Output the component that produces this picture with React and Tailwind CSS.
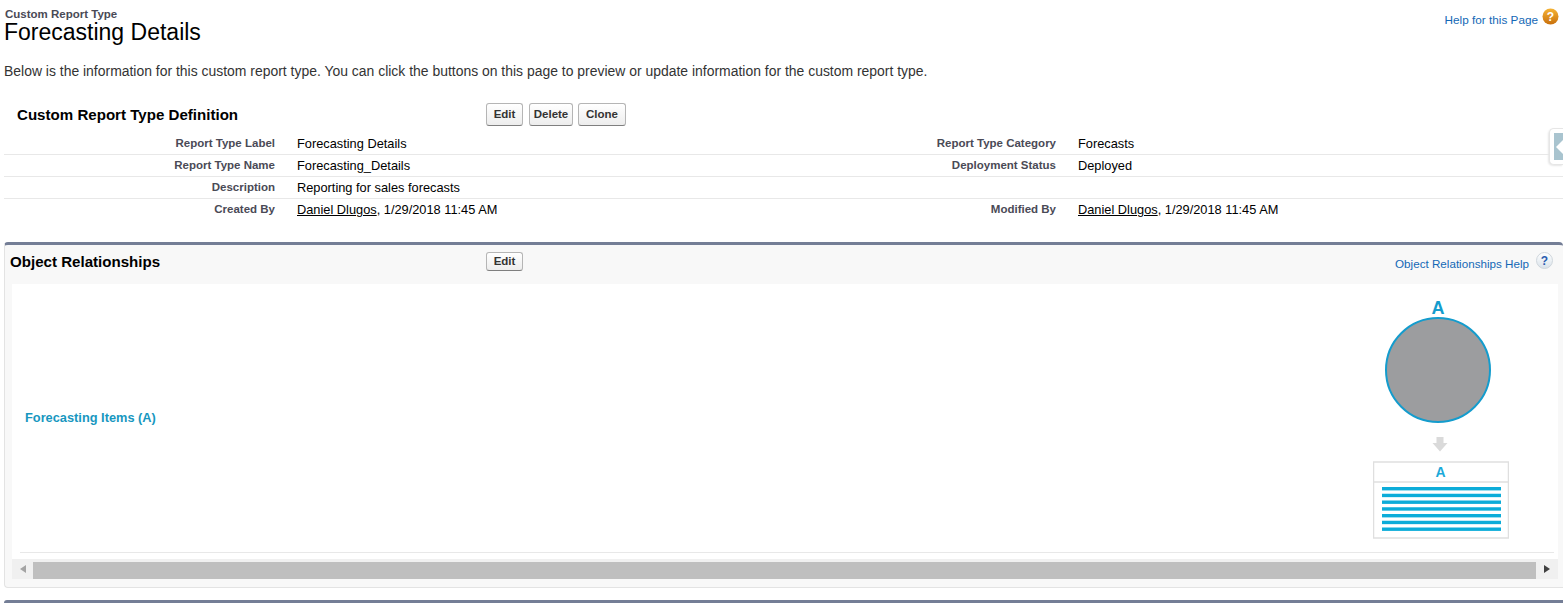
function Btn({ children, className = "" }) {
  return (
    <button className={`rounded-[3px] border border-[#b5b5b5] border-b-[#7f7f7f] bg-gradient-to-b from-white to-[#ededed] text-[11.5px] leading-none font-bold text-[#333] ${className}`}>
      {children}
    </button>
  );
}

function DetailRow({ label, value, label2, value2, last }) {
  return (
    <div className={`flex h-[22px] items-center text-[12.8px] ${last ? "" : "border-b border-[#e8e8e8]"}`}>
      <div className="w-[271px] text-right text-[11.5px] font-bold text-[#4a4a56]">{label}</div>
      <div className="ml-[22px] w-[488px] text-black">{value}</div>
      {label2 && <div className="w-[271px] text-right text-[11.5px] font-bold text-[#4a4a56]">{label2}</div>}
      {label2 && <div className="ml-[22px] text-black">{value2}</div>}
    </div>
  );
}

function Who() {
  return (
    <span>
      <span className="underline">Daniel Dlugos</span>, 1/29/2018 11:45 AM
    </span>
  );
}

function HelpIcon({ orange }) {
  return (
    <svg width="17" height="17" viewBox="0 0 17 17">
      <defs>
        <linearGradient id="og" x1="0" y1="0" x2="0" y2="1">
          <stop offset="0" stopColor="#f5b335" />
          <stop offset="1" stopColor="#c9700c" />
        </linearGradient>
        <linearGradient id="wg" x1="0" y1="0" x2="0" y2="1">
          <stop offset="0" stopColor="#ffffff" />
          <stop offset="1" stopColor="#d9e2ea" />
        </linearGradient>
      </defs>
      <circle cx="8.5" cy="8.5" r="8" fill={orange ? "url(#og)" : "url(#wg)"} stroke={orange ? "none" : "#cfd6dc"} />
      <text x="8.5" y="13" textAnchor="middle" fontSize="12" fontWeight="700" fontFamily="Liberation Sans" fill={orange ? "#fff" : "#2a5db0"}>?</text>
    </svg>
  );
}

function Diagram() {
  const lines = [0, 1, 2, 3, 4, 5, 6];
  return (
    <svg width="136" height="256" viewBox="0 0 136 256" className="mr-[45px]">
      <text x="65" y="30" textAnchor="middle" fontSize="18" fontWeight="700" fontFamily="Liberation Sans" fill="#149ccd">A</text>
      <circle cx="65" cy="86" r="52" fill="#9c9d9f" stroke="#149ccd" strokeWidth="2" />
      <path d="M63.5 153h7v6h4l-7.5 8.5l-7.5-8.5h4z" fill="#dadada" />
      <rect x="0.5" y="178" width="135" height="76" fill="#fff" stroke="#dfdfdf" strokeWidth="1.5" />
      <path d="M0 198h136" stroke="#dfdfdf" strokeWidth="1.5" />
      <text x="67.5" y="193" textAnchor="middle" fontSize="14" fontWeight="700" fontFamily="Liberation Sans" fill="#1ba9d9">A</text>
      {lines.map((i) => (
        <rect key={i} x="9" y={203 + i * 6.75} width="119" height="3.4" fill="#0cacd9" />
      ))}
    </svg>
  );
}

export default function App() {
  return (
    <div className="relative h-[603px] overflow-hidden bg-white font-['Liberation_Sans',Arial,sans-serif]">
      <div className="flex justify-between pl-[5px] pr-[4px] pt-[8px]">
        <div>
          <div className="text-[11.5px] leading-[13px] font-bold text-[#4a4a56]">Custom Report Type</div>
          <h1 className="-ml-px -mt-px text-[23px] leading-[24px] text-black">Forecasting Details</h1>
        </div>
        <div className="flex items-start gap-[4px] text-[11.75px] text-[#1468b6]">
          <span className="mt-[3px]">Help for this Page</span>
          <HelpIcon orange />
        </div>
      </div>

      <p className="mt-[19px] pl-[4px] text-[13.95px] leading-[16px] text-[#333]">
        Below is the information for this custom report type. You can click the buttons on this page to preview or update information for the custom report type.
      </p>

      <div className="ml-[4px] mt-[23px]">
        <div className="flex h-[31px] items-start">
          <h2 className="ml-[13px] w-[469px] text-[15.1px] leading-[26px] font-bold text-black">Custom Report Type Definition</h2>
          <div className="mt-[1px] flex">
            <Btn className="h-[23px] w-[37px]">Edit</Btn>
            <Btn className="ml-[6px] h-[23px] w-[44px]">Delete</Btn>
            <Btn className="ml-[5px] h-[23px] w-[48px]">Clone</Btn>
          </div>
        </div>
        <DetailRow label="Report Type Label" value="Forecasting Details" label2="Report Type Category" value2="Forecasts" />
        <DetailRow label="Report Type Name" value="Forecasting_Details" label2="Deployment Status" value2="Deployed" />
        <DetailRow label="Description" value="Reporting for sales forecasts" />
        <DetailRow label="Created By" value={<Who />} label2="Modified By" value2={<Who />} last />
      </div>

      <div className="ml-[4px] mt-[21px] h-[346px] rounded-t-[4px] rounded-bl-[4px] border-t-[3px] border-b border-l border-t-[#747e96] border-b-[#e3e3e3] border-l-[#e3e3e3] bg-[#f8f8f8]">
        <div className="flex h-[39px] items-start">
          <h3 className="ml-[5px] mt-[6px] w-[476px] text-[15.1px] font-bold text-black">Object Relationships</h3>
          <Btn className="mt-[7px] h-[19px] w-[37px]">Edit</Btn>
          <div className="ml-auto mr-[10px] mt-[7px] flex items-start gap-[7px] text-[11.65px] text-[#1468b6]">
            <span className="mt-[3px]">Object Relationships Help</span>
            <HelpIcon />
          </div>
        </div>
        <div className="ml-[7px] mr-[5px] h-[295px] bg-white">
          <div className="ml-[8px] mr-[4px] flex h-[269px] items-start justify-between border-b border-[#e8e8e8]">
            <span className="ml-[5px] self-center text-[12.8px] font-bold text-[#1797c0]">Forecasting Items (A)</span>
            <Diagram />
          </div>
          <div className="mt-[6px] flex h-[20px] bg-[#f0f0f0]">
            <div className="flex w-[21px] items-center justify-center">
              <span className="h-0 w-0 border-y-[4px] border-r-[6px] border-y-transparent border-r-[#a3a3a3]" />
            </div>
            <div className="mt-[3px] h-[17px] flex-1 bg-[#bfbfbf]" />
            <div className="flex w-[22px] items-center justify-center">
              <span className="h-0 w-0 border-y-[4px] border-l-[6px] border-y-transparent border-l-[#404040]" />
            </div>
          </div>
        </div>
      </div>

      <div className="ml-[4px] mt-[12px] h-[3px] rounded-tl-[4px] bg-[#747e96]" />

      <div className="absolute right-0 top-[128px] flex h-[37px] w-[14px] items-center rounded-l-[5px] border border-r-0 border-[#e6e6e6] bg-white pl-[4px] shadow-[-1px_1px_2px_#e6e6e6]">
        <div className="flex h-[27px] w-[9px] items-center bg-[#a9c4cf] pl-[2px]">
          <span className="h-0 w-0 border-y-[7px] border-r-[7px] border-y-transparent border-r-white" />
        </div>
      </div>
    </div>
  );
}
